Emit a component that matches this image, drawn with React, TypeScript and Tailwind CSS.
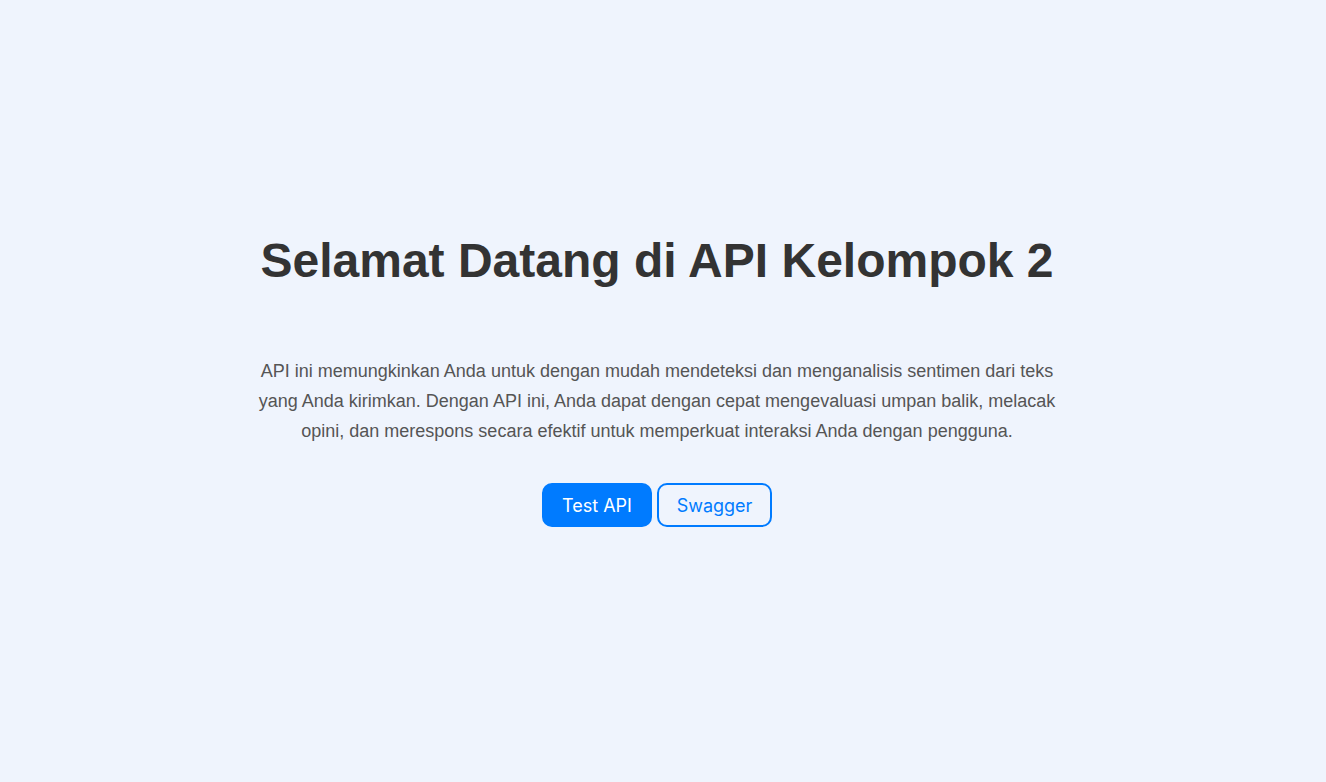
import React from "react";

export default function App() {
  return (
    <div className="min-h-screen w-full bg-[#eff4fd] flex flex-col items-center justify-center pb-[22px] pr-[12px]" style={{ fontFamily: '"Liberation Sans", Arial, sans-serif' }}>
      <h1 className="text-[48px] leading-[56px] font-bold text-[#333333] text-center">
        Selamat Datang di API Kelompok 2
      </h1>
      <p className="mt-[67px] w-[800px] text-center text-[18px] leading-[30px] text-[#555555]">
        API ini memungkinkan Anda untuk dengan mudah mendeteksi dan menganalisis sentimen dari teks yang Anda kirimkan. Dengan API ini, Anda dapat dengan cepat mengevaluasi umpan balik, melacak opini, dan merespons secara efektif untuk memperkuat interaksi Anda dengan pengguna.
      </p>
      <div className="mt-[37px] flex gap-[5px]" style={{ fontFamily: 'Inter, "Liberation Sans", sans-serif' }}>
        <button className="h-[44px] w-[110px] rounded-[10px] bg-[#007bff] text-white text-[18px] border-2 border-[#007bff]">
          Test API
        </button>
        <button className="h-[44px] w-[115px] rounded-[10px] bg-transparent text-[#007bff] text-[18px] border-2 border-[#007bff]">
          Swagger
        </button>
      </div>
    </div>
  );
}
